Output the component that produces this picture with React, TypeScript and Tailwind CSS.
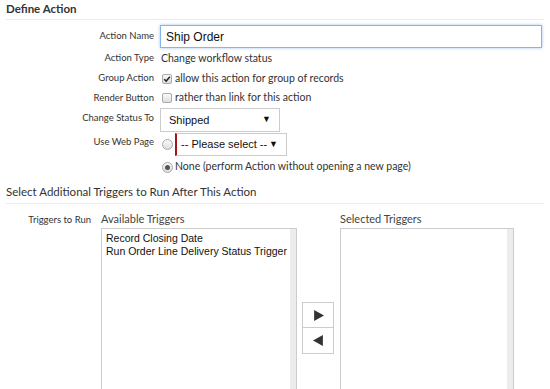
import React from 'react';

const Label: React.FC<{ children: React.ReactNode; className?: string }> = ({ children, className = '' }) => (
  <div className={`w-[154px] shrink-0 text-right text-[9.5px] text-[#333] ${className}`}>{children}</div>
);

const Check: React.FC<{ checked?: boolean }> = ({ checked }) => (
  <span className="inline-flex items-center justify-center w-[10px] h-[10px] border border-[#aaa] rounded-[2px] bg-gradient-to-b from-[#fafafa] to-[#ddd] mr-[3px]">
    {checked && (
      <svg viewBox="0 0 10 10" className="w-[8px] h-[8px]">
        <path d="M1.5 5.2 L4 7.6 L8.6 2.2" fill="none" stroke="#222" strokeWidth="1.8" />
      </svg>
    )}
  </span>
);

const Radio: React.FC<{ checked?: boolean }> = ({ checked }) => (
  <span className="inline-flex items-center justify-center w-[11px] h-[11px] rounded-full border border-[#aaa] bg-gradient-to-b from-[#fafafa] to-[#ddd] mr-[2px]">
    {checked && <span className="w-[5px] h-[5px] rounded-full bg-[#555]" />}
  </span>
);

const Select: React.FC<{ value: string; className?: string }> = ({ value, className = '' }) => (
  <div
    className={`flex items-center justify-between whitespace-nowrap border border-[#ccc] bg-white font-['Liberation_Sans',Arial,sans-serif] text-[11px] text-[#111] pr-[8px] ${className}`}
  >
    <span>{value}</span>
    <span className="text-[9px] text-[#111]">▼</span>
  </div>
);

const Heading: React.FC<{ children: React.ReactNode; className?: string }> = ({ children, className = '' }) => (
  <div className={`mx-[6px] border-b border-[#ececec] text-[11.5px] text-[#333] ${className}`}>{children}</div>
);

export default function App() {
  return (
    <div className="w-[550px] h-[389px] overflow-hidden bg-white font-['Lato','Open_Sans',sans-serif] text-[#333]">
      <Heading className="pt-[2px] pb-[3px] leading-[14px] font-bold">Define Action</Heading>

      <div className="flex items-center mt-[5px] h-[23px]">
        <Label>Action Name</Label>
        <div className="ml-[6px] w-[382px] h-[23px] border border-[#86b6e8] shadow-[0_0_3px_rgba(90,150,220,0.55)] flex items-center px-[5px] font-['Liberation_Sans',Arial,sans-serif] text-[12px] text-[#111]">
          Ship Order
        </div>
      </div>

      <div className="flex items-center h-[21px]">
        <Label>Action Type</Label>
        <div className="ml-[7px] text-[10.5px] text-[#333]">Change workflow status</div>
      </div>

      <div className="flex items-center h-[19px]">
        <Label>Group Action</Label>
        <div className="ml-[8px] flex items-center text-[10.5px] text-[#333]">
          <Check checked />
          allow this action for group of records
        </div>
      </div>

      <div className="flex items-center h-[20px]">
        <Label>Render Button</Label>
        <div className="ml-[8px] flex items-center text-[10.5px] text-[#333]">
          <Check />
          rather than link for this action
        </div>
      </div>

      <div className="flex items-center h-[24px]">
        <Label className="-mt-[4px]">Change Status To</Label>
        <Select value="Shipped" className="ml-[6px] w-[120px] h-[24px] pl-[8px]" />
      </div>

      <div className="flex items-center h-[23px] mt-[1px]">
        <Label className="-mt-[4px]">Use Web Page</Label>
        <div className="ml-[8px] flex items-center">
          <Radio />
          <Select value="-- Please select --" className="w-[112px] h-[23px] pl-[4px] border-l-2 border-l-[#a31515]" />
        </div>
      </div>

      <div className="flex items-center h-[20px] mt-[1px]">
        <div className="w-[154px] shrink-0" />
        <div className="ml-[8px] flex items-center text-[10.5px] text-[#333]">
          <Radio checked />
          None (perform Action without opening a new page)
        </div>
      </div>

      <Heading className="mt-[8px] pb-[4px] leading-[14px]">Select Additional Triggers to Run After This Action</Heading>

      <div className="flex mt-[8px]">
        <div className="w-[91px] shrink-0 text-right text-[9.5px] text-[#333] pt-[1px]">Triggers to Run</div>
        <div className="ml-[10px] flex flex-col">
          <div className="text-[11px] text-[#444] leading-[14px] h-[16px]">Available Triggers</div>
          <div className="flex w-[196px] h-[170px] border border-[#ccc]">
            <div className="flex-1 pl-[4px] pt-[3px] font-['Liberation_Sans',Arial,sans-serif] text-[10.5px] leading-[13px] text-[#111]">
              <div>Record Closing Date</div>
              <div>Run Order Line Delivery Status Trigger</div>
            </div>
            <div className="w-[6px] bg-[#ececec]" />
          </div>
        </div>
        <div className="ml-[5px] mt-[90px] flex flex-col">
          <div className="w-[32px] h-[26px] border border-[#ccc] flex items-center justify-center">
            <svg viewBox="0 0 10 10" className="w-[11px] h-[11px]">
              <path d="M1 0 L10 5 L1 10 Z" fill="#333" />
            </svg>
          </div>
          <div className="w-[32px] h-[26px] border border-[#ccc] border-t-0 flex items-center justify-center">
            <svg viewBox="0 0 10 10" className="w-[11px] h-[11px]">
              <path d="M9 0 L0 5 L9 10 Z" fill="#333" />
            </svg>
          </div>
        </div>
        <div className="ml-[6px] flex flex-col">
          <div className="text-[11px] text-[#444] leading-[14px] h-[16px]">Selected Triggers</div>
          <div className="flex w-[174px] h-[170px] border border-[#ccc]">
            <div className="flex-1" />
            <div className="w-[6px] bg-[#ececec]" />
          </div>
        </div>
      </div>
    </div>
  );
}
